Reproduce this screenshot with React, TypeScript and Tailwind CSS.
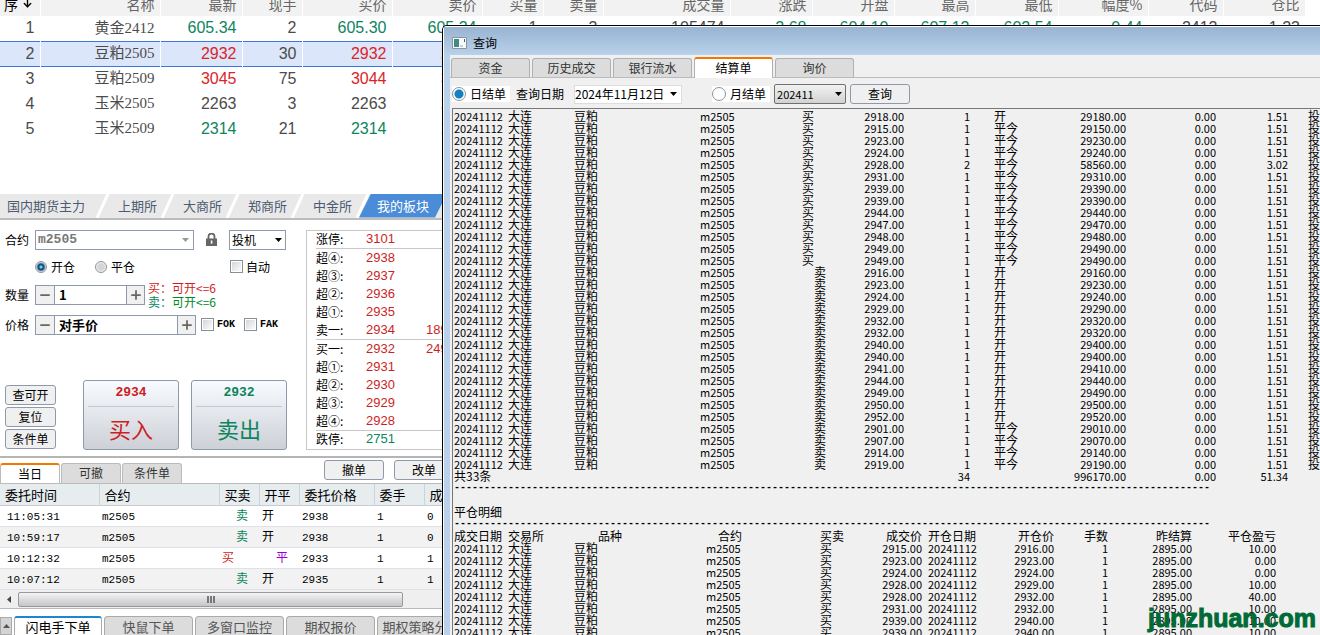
import { useState, type ReactNode } from "react";
import { clsx } from "clsx";
import { ArrowDown, Minus, Plus } from "lucide-react";

const quoteColumns = [
  { label: "名称", width: "w-[120px]" },
  { label: "最新", width: "w-[82px]" },
  { label: "现手", width: "w-[60px]" },
  { label: "买价", width: "w-[90px]" },
  { label: "卖价", width: "w-[90px]" },
  { label: "买量", width: "w-[61px]" },
  { label: "卖量", width: "w-[60px]" },
  { label: "成交量", width: "w-[127px]" },
  { label: "涨跌", width: "w-[82px]" },
  { label: "开盘", width: "w-[82px]" },
  { label: "最高", width: "w-[81px]" },
  { label: "最低", width: "w-[83px]" },
  { label: "幅度%", width: "w-[90px]" },
  { label: "代码", width: "w-[75px]" },
  { label: "仓比", width: "w-[82px]" },
];

// indexes of the columns that are tinted by the price direction
const priceCells = [1, 3, 4, 8, 9, 10, 11, 12];

const quotes = [
  { trend: "down", cells: ["黄金2412", "605.34", "2", "605.30", "605.34", "1", "3", "105474", "2.68", "604.10", "607.12", "602.54", "0.44", "2412", "1.23"] },
  { trend: "up", cells: ["豆粕2505", "2932", "30", "2932", "2933"] },
  { trend: "up", cells: ["豆粕2509", "3045", "75", "3044", "3045"] },
  { trend: "flat", cells: ["玉米2505", "2263", "3", "2263", "2264"] },
  { trend: "down", cells: ["玉米2509", "2314", "21", "2314", "2315"] },
];

const trendColor: Record<string, string> = {
  up: "text-[#dc2328]",
  down: "text-[#0d8560]",
  flat: "text-[#4b4b4b]",
};

const sectors = ["国内期货主力", "上期所", "大商所", "郑商所", "中金所"];

const depthGroups = [
  [["涨停", "3101"]],
  [["超④", "2938"], ["超③", "2937"], ["超②", "2936"], ["超①", "2935"], ["卖一", "2934", "189"]],
  [["买一", "2932", "249"], ["超①", "2931"], ["超②", "2930"], ["超③", "2929"], ["超④", "2928"]],
  [["跌停", "2751"]],
];

const orders = [
  { time: "11:05:31", side: "卖", open: "开", price: "2938", lots: 1, filled: 0 },
  { time: "10:59:17", side: "卖", open: "开", price: "2938", lots: 1, filled: 0 },
  { time: "10:12:32", side: "买", open: "平", price: "2933", lots: 1, filled: 1 },
  { time: "10:07:12", side: "卖", open: "开", price: "2935", lots: 1, filled: 1 },
];

const trades: [string, number, string][] = [
  ["买", 2918, "开"],
  ["买", 2915, "平今"],
  ["买", 2923, "平今"],
  ["买", 2924, "平今"],
  ["买", 2928, "平今"],
  ["买", 2931, "平今"],
  ["买", 2939, "平今"],
  ["买", 2939, "平今"],
  ["买", 2944, "平今"],
  ["买", 2947, "平今"],
  ["买", 2948, "平今"],
  ["买", 2949, "平今"],
  ["买", 2949, "平今"],
  ["卖", 2916, "开"],
  ["卖", 2923, "开"],
  ["卖", 2924, "开"],
  ["卖", 2929, "开"],
  ["卖", 2932, "开"],
  ["卖", 2932, "开"],
  ["卖", 2940, "开"],
  ["卖", 2940, "开"],
  ["卖", 2941, "开"],
  ["卖", 2944, "开"],
  ["卖", 2949, "开"],
  ["卖", 2950, "开"],
  ["卖", 2952, "开"],
  ["卖", 2901, "平今"],
  ["卖", 2907, "平今"],
  ["卖", 2914, "平今"],
  ["卖", 2919, "平今"],
];

const closed = [
  ["2915.00", "2916.00", "10.00"],
  ["2923.00", "2923.00", "0.00"],
  ["2924.00", "2924.00", "0.00"],
  ["2928.00", "2929.00", "10.00"],
  ["2928.00", "2932.00", "40.00"],
  ["2931.00", "2932.00", "10.00"],
  ["2939.00", "2940.00", "10.00"],
  ["2939.00", "2940.00", "10.00"],
];

function Caret({ className }: { className?: string }) {
  return (
    <svg viewBox="0 0 7 4" className={clsx("h-1 w-[7px] fill-current", className)}>
      <path d="M0 0h7L3.5 4z" />
    </svg>
  );
}

function Slash() {
  return (
    <svg viewBox="0 0 14 24" className="h-6 w-[14px] shrink-0">
      <path d="M1 24L12 0" stroke="#fff" strokeWidth="3" />
    </svg>
  );
}

function LockIcon() {
  return (
    <svg viewBox="0 0 11 13" className="mx-3 h-[13px] w-[11px] shrink-0">
      <path d="M2.5 6V3.6a3 3 0 0 1 6 0V6" fill="none" stroke="#666" strokeWidth="1.8" />
      <path d="M0 5.5h11V13H0z" fill="#666" />
      <path d="M4.8 7.5h1.6v3.2H4.8z" fill="#fff" />
    </svg>
  );
}

function PushButton({ children, className }: { children: ReactNode; className?: string }) {
  return (
    <button className={clsx("h-5 rounded-[3px] border border-[#8e9aab] bg-[#f0f0f0] text-xs leading-none text-black", className)}>
      {children}
    </button>
  );
}

function Stepper({ label, value, width }: { label: string; value: string; width: string }) {
  return (
    <div className="flex h-5 border border-[#8e9aab] bg-white text-[#666]">
      <button aria-label={`${label}减`} className="flex w-[19px] items-center justify-center border-r border-[#8e9aab] bg-[#f0f0f0]">
        <Minus size={14} strokeWidth={3} />
      </button>
      <input aria-label={label} defaultValue={value} className={clsx("px-1 text-[13px] font-bold text-black outline-none", width)} />
      <button aria-label={`${label}加`} className="flex w-[18px] items-center justify-center border-l border-[#8e9aab] bg-[#f0f0f0]">
        <Plus size={14} strokeWidth={3} />
      </button>
    </div>
  );
}

function Check({ label, className }: { label: string; className?: string }) {
  return (
    <label className={clsx("flex items-center gap-[3px]", className)}>
      <input
        type="checkbox"
        className="size-[13px] appearance-none border border-[#8a8f97] bg-linear-to-br from-[#cfd3d8] to-white p-px shadow-[inset_0_0_0_1px_#fff] checked:bg-[#1c7fc2]"
      />
      {label}
    </label>
  );
}

function Radio({ name, label, checked, flat }: { name: string; label: string; checked?: boolean; flat?: boolean }) {
  return (
    <label className={clsx("flex items-center gap-1", flat && "bg-white pr-1")}>
      <input
        type="radio"
        name={name}
        defaultChecked={checked}
        className={clsx(
          "appearance-none rounded-full border border-[#8a94a0]",
          flat
            ? "size-[14px] bg-white checked:bg-[radial-gradient(circle,#1480c4_0_4px,#fff_5px)]"
            : "size-3 bg-[radial-gradient(circle,#d5d5d5_0_3px,#f2f2f2_5px)] checked:bg-[radial-gradient(circle,#7cc8ee_0_1px,#12527f_2px_3px,#eee_5px)]"
        )}
      />
      {label}
    </label>
  );
}

function QuoteTable() {
  return (
    <div className="-mt-[9px] min-h-0 flex-1 overflow-hidden">
      <table className="w-[1305px] table-fixed border-collapse text-right">
        <thead>
          <tr className="h-[25px] bg-[#f2f2f2] text-sm leading-none text-[#666]">
            <th className="w-10 border-r border-white pl-1 text-left font-normal text-black">
              <span className="flex items-center gap-1">
                序
                <ArrowDown size={11} strokeWidth={3} />
              </span>
            </th>
            {quoteColumns.map((c) => (
              <th key={c.label} className={clsx("border-r border-white pr-[5px] font-normal whitespace-nowrap", c.width)}>
                {c.label}
              </th>
            ))}
          </tr>
        </thead>
        <tbody>
          {quotes.map((q, i) => (
            <tr
              key={q.cells[0]}
              className={clsx(
                "h-[25px] font-['Liberation_Sans'] text-base leading-none text-[#4b4b4b]",
                i === 1 && "border-y border-[#3c78d8] bg-[#dce6fa]"
              )}
            >
              <td className="pr-[5px]">{i + 1}</td>
              {quoteColumns.map((c, n) => (
                <td
                  key={c.label}
                  className={clsx(
                    "border-l border-l-white pr-[5px]",
                    n === 0 && "font-['Liberation_Serif','Noto_Sans_CJK_SC',serif] text-[15px]",
                    priceCells.includes(n) && trendColor[q.trend]
                  )}
                >
                  {q.cells[n]}
                </td>
              ))}
            </tr>
          ))}
        </tbody>
      </table>
    </div>
  );
}

function SectorTabs() {
  return (
    <div className="flex h-[26px] border-b-2 border-[#bdbdbd] bg-[#e9e9ea] text-[13px] leading-6 text-[#4c5b70]">
      {sectors.map((s, i) => (
        <div key={s} className="flex shrink-0">
          <button className={clsx("text-center", i === 0 ? "w-24 pr-1" : "w-[51px] pl-1")}>{s}</button>
          <Slash />
        </div>
      ))}
      <button className="-ml-[11px] h-6 w-[88px] bg-[#4a8cd8] [clip-path:polygon(12px_0,100%_0,calc(100%_-_12px)_100%,0_100%)] text-white">
        我的板块
      </button>
    </div>
  );
}

function OrderForm() {
  return (
    <div className="w-[306px] shrink-0 pt-[10px] pl-[5px]">
      <div className="flex h-5 items-center">
        <label htmlFor="contract" className="w-[30px]">合约</label>
        <div className="flex h-5 w-[159px] items-center border border-[#8e9aab] pr-1">
          <input
            id="contract"
            defaultValue="m2505"
            className="w-full min-w-0 px-0.5 font-['Liberation_Mono'] text-[13px] font-bold text-[#777] outline-none"
          />
          <Caret className="shrink-0 text-[#999]" />
        </div>
        <LockIcon />
        <div className="relative">
          <select aria-label="投保" className="h-5 w-[57px] appearance-none border border-[#8e9aab] bg-white pl-0.5 leading-none">
            <option>投机</option>
          </select>
          <Caret className="pointer-events-none absolute top-2 right-1" />
        </div>
      </div>
      <div className="mt-[7px] flex h-5 items-center pl-[30px]">
        <div className="flex w-[165px] gap-5">
          <Radio name="offset" label="开仓" checked />
          <Radio name="offset" label="平仓" />
        </div>
        <Check label="自动" className="ml-[30px]" />
      </div>
      <div className="mt-2 flex h-5 items-center">
        <span className="w-[30px]">数量</span>
        <Stepper label="数量" value="1" width="w-[71px]" />
        <div className="ml-[3px] leading-[14px] whitespace-nowrap text-[#008a1c]">
          <div className="text-[#d01d24]">买：可开&lt;=6</div>
          <div>
            <span className="text-[#0d8560]">卖：</span>可开&lt;=6
          </div>
        </div>
      </div>
      <div className="mt-[10px] flex h-5 items-center">
        <span className="w-[30px]">价格</span>
        <Stepper label="价格" value="对手价" width="w-[122px]" />
        <div className="ml-[5px] flex gap-[9px] font-['Liberation_Mono'] text-[10px] font-bold">
          <Check label="FOK" />
          <Check label="FAK" />
        </div>
      </div>
      <div className="mt-[45px] mb-[6px] flex h-[70px] items-end">
        <div className="flex w-[51px] flex-col gap-0.5 pb-px">
          <PushButton>查可开</PushButton>
          <PushButton>复位</PushButton>
          <PushButton>条件单</PushButton>
        </div>
        <TradeButton price="2934" label="买入" className="ml-[27px] text-[#cc1f25]" />
        <TradeButton price="2932" label="卖出" className="ml-3 text-[#0d8560]" />
      </div>
    </div>
  );
}

function TradeButton({ price, label, className }: { price: string; label: string; className: string }) {
  return (
    <button className={clsx("flex h-[70px] w-24 flex-col rounded-[3px] border border-[#8e9aab] bg-linear-to-b from-[#f8fbff] to-[#cdd0d6] px-1", className)}>
      <span className="h-[27px] w-full border-b border-[#c3c8cf] font-['Liberation_Mono'] text-[13px] leading-6 font-bold">{price}</span>
      <span className="w-full text-[22px] leading-[42px]">{label}</span>
    </button>
  );
}

function DepthPanel() {
  return (
    <div className="mt-[10px] mb-[6px] w-[200px] border border-[#c8c8c8] pl-[9px]">
      {depthGroups.map((group, g) => (
        <div key={g} className={clsx("border-[#c8c8c8]", g < 3 && "border-b")}>
          {group.map(([label, price, lots]) => (
            <div key={label} className={clsx("flex items-center", group.length > 1 ? "h-[18px]" : "h-[17px]")}>
              <span className="w-[50px]">{label}:</span>
              <span
                className={clsx(
                  "w-[60px] font-['Liberation_Sans'] text-[13px]",
                  label === "跌停" ? "text-[#0d8560]" : "text-[#cc1f25]"
                )}
              >
                {price}
              </span>
              <span className="font-['Liberation_Sans'] text-[13px] text-[#cc1f25]">{lots}</span>
            </div>
          ))}
        </div>
      ))}
    </div>
  );
}

const tabBase = "rounded-t-[3px] border border-b-0 text-xs leading-none";

function OrderList() {
  const [tab, setTab] = useState("当日");
  return (
    <div className="border-t-2 border-[#b5b5b5]">
      <div className="flex h-[26px] items-end border-b border-[#bbb]">
        {["当日", "可撤", "条件单"].map((t) => (
          <button
            key={t}
            onClick={() => setTab(t)}
            className={clsx(
              "mr-px h-5 w-[60px] border-[#bbb]",
              tabBase,
              tab === t ? "border-t-2 border-t-[#f07800] bg-white" : "bg-[#dcdcdc] text-[#333]"
            )}
          >
            {t}
          </button>
        ))}
        <div className="mb-[3px] ml-[141px] flex gap-[10px]">
          <PushButton className="w-[60px]">撤单</PushButton>
          <PushButton className="w-[60px]">改单</PushButton>
        </div>
      </div>
      <table className="w-[500px] table-fixed border-collapse text-left">
        <thead>
          <tr className="h-[22px] border-b border-[#c8ccd2] bg-[#e7ecef] text-[13px] leading-none whitespace-nowrap [&>th]:border-r [&>th]:border-[#cdd3dc] [&>th]:pl-[5px] [&>th]:font-normal">
            <th className="w-[99px]">委托时间</th>
            <th className="w-[120px]">合约</th>
            <th className="w-[40px]">买卖</th>
            <th className="w-[40px]">开平</th>
            <th className="w-[75px]">委托价格</th>
            <th className="w-[50px]">委手</th>
            <th>成手</th>
          </tr>
        </thead>
        <tbody>
          {orders.map((o) => (
            <tr
              key={o.time}
              className="h-[21px] border-b border-[#dfe0ea] font-['Liberation_Mono','Noto_Sans_CJK_SC',monospace] text-[11px] leading-none even:bg-[#f2f2f2] [&>td]:pt-0.5 [&>td]:pl-[3px]"
            >
              <td><span className="pl-1">{o.time}</span></td>
              <td>m2505</td>
              <td className={clsx("text-xs", o.side === "卖" ? "text-[#0d8560]" : "text-[#cc1f25]")}>
                <span className={clsx(o.side === "卖" && "pl-[14px]")}>{o.side}</span>
              </td>
              <td className={clsx("text-xs", o.open === "平" && "text-[#9400d3]")}>
                <span className={clsx(o.open === "平" && "pl-[14px]")}>{o.open}</span>
              </td>
              <td>{o.price}</td>
              <td>{o.lots}</td>
              <td>{o.filled}</td>
            </tr>
          ))}
        </tbody>
      </table>
      <div className="flex h-[19px] items-center border-b border-[#bbb] bg-[#efefef]">
        <svg viewBox="0 0 4 7" className="mx-[7px] h-[7px] w-1">
          <path d="M4 0v7L0 3.5z" fill="#444" />
        </svg>
        <div className="flex h-[15px] w-[385px] items-center justify-center gap-px rounded-[2px] border border-[#999] bg-linear-to-b from-[#f4f4f4] to-[#c4c5c8]">
          <i className="h-[7px] w-0.5 bg-[#777]" />
          <i className="h-[7px] w-0.5 bg-[#777]" />
          <i className="h-[7px] w-0.5 bg-[#777]" />
        </div>
      </div>
    </div>
  );
}

function BottomTabs() {
  return (
    <div className="flex h-[26px] shrink-0 items-end gap-0.5 overflow-hidden text-[13px] leading-none whitespace-nowrap text-[#555]">
      <button aria-label="展开" className="flex h-[18px] w-3 items-center justify-center border border-[#aaa] bg-[#d4d4d4]">
        <Caret className="rotate-180" />
      </button>
      <button className="h-[19px] w-[88px] shrink-0 rounded-t-[3px] border border-t-2 border-b-0 border-[#aaa] border-t-[#1d86d0] bg-white text-black">
        闪电手下单
      </button>
      {["快鼠下单", "多窗口监控", "期权报价", "期权策略分析"].map((t) => (
        <button key={t} className="h-[19px] w-[89px] shrink-0 rounded-t-[4px] border border-b-0 border-[#aaa] bg-[#dcdcdc]">
          {t}
        </button>
      ))}
    </div>
  );
}

function Rule() {
  return <div className="h-3 overflow-hidden font-['Liberation_Mono'] text-[10px] leading-3 font-bold whitespace-nowrap">{"-".repeat(126)}</div>;
}

const ledgerTable =
  "table-fixed border-collapse text-left leading-3 whitespace-nowrap [&_tr]:h-3 [&_th]:font-normal [&_td]:p-0 [&_th]:p-0";
const num = "text-right text-[11px]";

function Statement() {
  return (
    <div className="ml-0.5 min-h-0 flex-1 overflow-hidden border-t border-l border-[#777] pt-px pl-px">
      <table className={clsx("w-[866px]", ledgerTable)}>
        <colgroup>
          <col className="w-[54px]" />
          <col className="w-[66px]" />
          <col className="w-[126px]" />
          <col className="w-[102px]" />
          <col className="w-[36px]" />
          <col className="w-[66px]" />
          <col className="w-[66px]" />
          <col className="w-[84px]" />
          <col className="w-[72px]" />
          <col className="w-[90px]" />
          <col className="w-[72px]" />
          <col className="w-[32px]" />
        </colgroup>
        <tbody>
          {trades.map(([side, price, offset], i) => {
            const lots = i === 4 ? 2 : 1;
            return (
              <tr key={i}>
                <td className="text-[11px]">20241112</td>
                <td>大连</td>
                <td>豆粕</td>
                <td className="text-[11px]">m2505</td>
                <td><span className={clsx(side === "卖" && "pl-3")}>{side}</span></td>
                <td className={num}>{price.toFixed(2)}</td>
                <td className={num}>{lots}</td>
                <td><span className="pl-6">{offset}</span></td>
                <td className={num}>{(price * lots * 10).toFixed(2)}</td>
                <td className={num}>0.00</td>
                <td className={num}>{(1.51 * lots).toFixed(2)}</td>
                <td className="text-right">投</td>
              </tr>
            );
          })}
          <tr>
            <td colSpan={6}>共33条</td>
            <td className={num}>34</td>
            <td />
            <td className={num}>996170.00</td>
            <td className={num}>0.00</td>
            <td className={num}>51.34</td>
            <td />
          </tr>
        </tbody>
      </table>
      <Rule />
      <h2 className="pt-3 leading-3">平仓明细</h2>
      <Rule />
      <table className={clsx("w-[822px]", ledgerTable)}>
        <thead>
          <tr>
            <th className="w-[54px]">成交日期</th>
            <th className="w-[66px]">交易所</th>
            <th className="w-[132px]"><span className="pl-6">品种</span></th>
            <th className="w-[114px]"><span className="pl-3">合约</span></th>
            <th className="w-[42px]">买卖</th>
            <th className="w-[60px] text-right">成交价</th>
            <th className="w-[60px]"><span className="pl-[6px]">开仓日期</span></th>
            <th className="w-[72px] text-right">开仓价</th>
            <th className="w-[54px] text-right">手数</th>
            <th className="w-[84px] text-right">昨结算</th>
            <th className="w-[84px] text-right">平仓盈亏</th>
          </tr>
        </thead>
        <tbody>
          {closed.map(([price, openPrice, profit], i) => (
            <tr key={i}>
              <td className="text-[11px]">20241112</td>
              <td>大连</td>
              <td>豆粕</td>
              <td className="text-[11px]">m2505</td>
              <td>买</td>
              <td className={num}>{price}</td>
              <td className="text-[11px]"><span className="pl-[6px]">20241112</span></td>
              <td className={num}>{openPrice}</td>
              <td className={num}>1</td>
              <td className={num}>2895.00</td>
              <td className={num}>{profit}</td>
            </tr>
          ))}
        </tbody>
      </table>
    </div>
  );
}

function QueryWindow() {
  const [tab, setTab] = useState("结算单");
  return (
    <section className="absolute top-[25px] right-0 bottom-0 left-[442px] flex flex-col overflow-hidden rounded-tl-[5px] border-t border-l border-black bg-[#b9d1ea]">
      <header className="flex h-[29px] shrink-0 items-center gap-[6px] border-t border-l border-white bg-linear-to-b from-[#98b4d2] to-[#b9d1ea] pt-1 pl-2">
        <svg viewBox="0 0 15 12" className="h-3 w-[15px]">
          <path d="M.5.5h14v11H.5z" fill="#f7f9fa" stroke="#8a959e" />
          <path d="M2 2h5v8H2z" fill="#3f8a86" />
          <path d="M12 2h1v3h-1z" fill="#2d5fa8" />
          <path d="M8 8h3v2H8z" fill="#c9d2d8" />
        </svg>
        <h1 className="leading-none">查询</h1>
      </header>
      <div className="flex min-h-0 flex-1 border-l border-white pl-[6px]">
        <div className="flex min-w-0 flex-1 flex-col bg-[#f0f0f0]">
          <div className="flex h-[23px] shrink-0 items-end gap-0.5 border-b border-[#bbb] pl-px">
            {["资金", "历史成交", "银行流水", "结算单", "询价"].map((t) => (
              <button
                key={t}
                onClick={() => setTab(t)}
                className={clsx(
                  "w-[79px] border-[#b0b0b0]",
                  tabBase,
                  tab === t ? "-mb-px h-[21px] border-t-2 border-t-[#f07800] bg-white pb-0.5" : "h-[19px] bg-[#dcdcdc] text-[#333]"
                )}
              >
                {t}
              </button>
            ))}
          </div>
          <div className="flex h-[30px] shrink-0 items-center pt-0.5 pl-0.5">
            <Radio name="period" label="日结单" checked flat />
            <label htmlFor="day" className="mr-[10px] ml-[6px]">查询日期</label>
            <div className="flex h-[19px] w-[108px] items-center border border-[#ddd] bg-white pr-1">
              <input id="day" defaultValue="2024年11月12日" className="w-full min-w-0 text-xs outline-none" />
              <Caret className="shrink-0" />
            </div>
            <div className="ml-[30px]">
              <Radio name="period" label="月结单" flat />
            </div>
            <div className="relative ml-1">
              <select
                aria-label="月份"
                className="h-5 w-[72px] appearance-none rounded-[2px] border border-[#707070] bg-linear-to-b from-[#f2f2f2] to-[#d2d2d2] pl-0.5 text-[11px] leading-none"
              >
                <option>202411</option>
              </select>
              <Caret className="pointer-events-none absolute top-2 right-1" />
            </div>
            <PushButton className="ml-1 w-[60px]">查询</PushButton>
          </div>
          <Statement />
        </div>
      </div>
    </section>
  );
}

export default function App() {
  return (
    <main className="relative flex h-screen flex-col overflow-hidden bg-white font-['Noto_Sans_CJK_SC',sans-serif] text-xs text-black">
      <QuoteTable />
      <SectorTabs />
      <div className="flex">
        <OrderForm />
        <DepthPanel />
      </div>
      <OrderList />
      <BottomTabs />
      <QueryWindow />
      <div className="absolute right-1 bottom-[5px] font-['Liberation_Sans'] text-[25px] leading-6 font-bold text-[#006b35] [-webkit-text-stroke:1px_#006b35]">
        junzhuan.com
      </div>
    </main>
  );
}
